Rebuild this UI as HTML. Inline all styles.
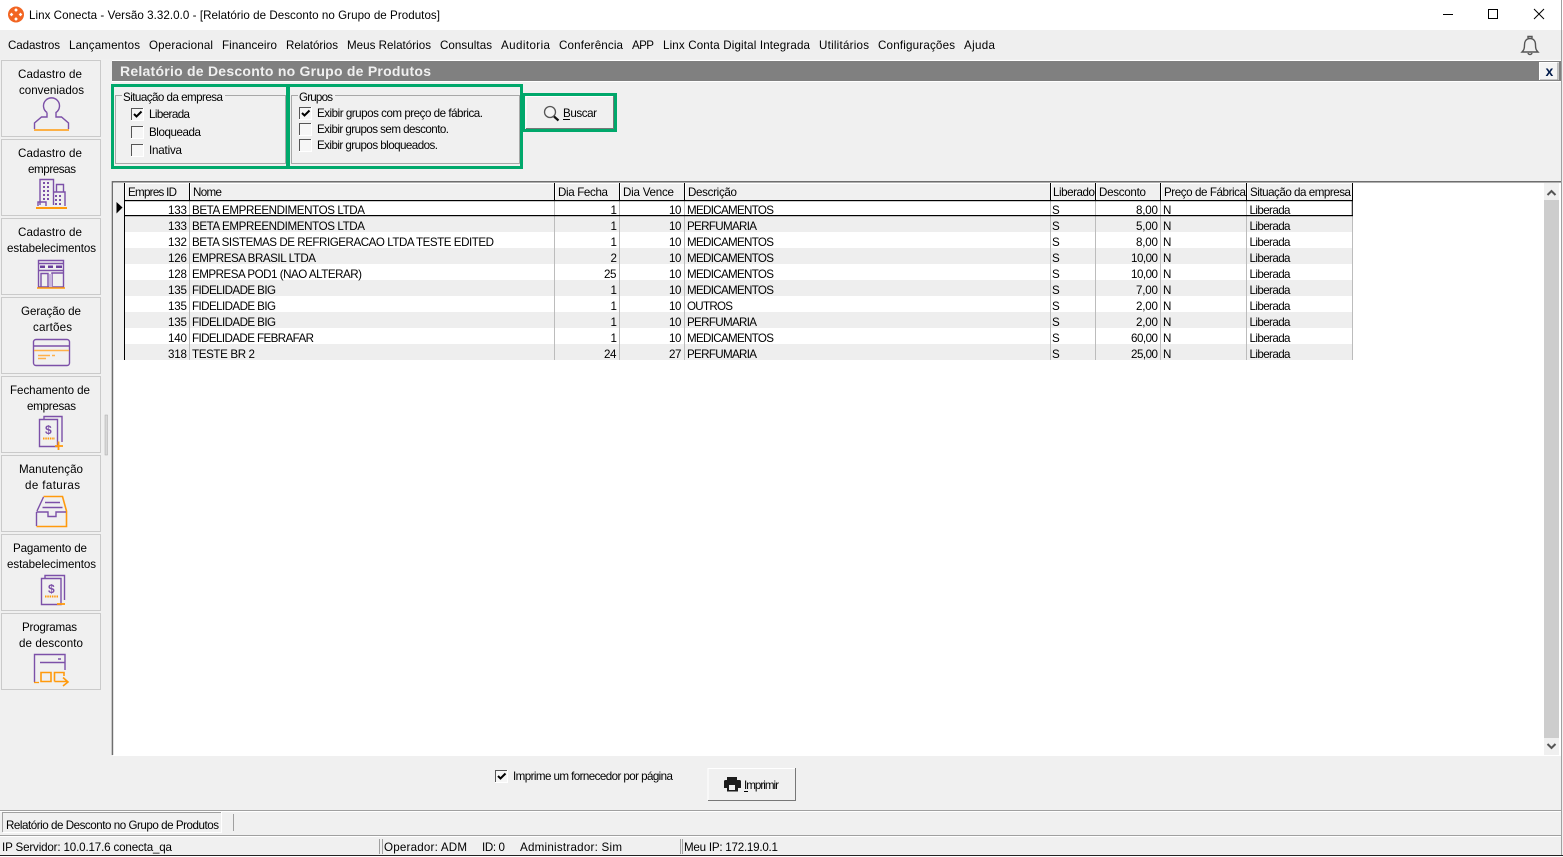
<!DOCTYPE html>
<html><head><meta charset="utf-8"><title>Linx Conecta</title>
<style>
html,body{margin:0;padding:0;width:1563px;height:857px;overflow:hidden;background:#f0f0f0}
svg{display:block;position:absolute;left:0;top:0}
text{font-family:"Liberation Sans",sans-serif;font-size:11.6px;fill:#000;white-space:pre}
.c{fill:#111}
.p{fill:none;stroke:#7c50a8;stroke-width:1.4}
.o{fill:none;stroke:#ff9a0d;stroke-width:1.6}
</style></head><body>
<svg width="1563" height="857" viewBox="0 0 1563 857" xmlns="http://www.w3.org/2000/svg">
<rect width="1563" height="857" fill="#f0f0f0"/>
<!-- Title bar -->
<rect width="1563" height="30" fill="#fff"/>
<rect y="30" width="1563" height="29" fill="#efefef"/>
<rect x="1561" y="0" width="1" height="857" fill="#a0a0a0"/>
<circle cx="16" cy="14.500" r="8" fill="#f26522"/>
<g fill="#fff"><rect x="14.700" y="8.700" width="2.600" height="2.600" transform="rotate(45 16 10)"/><rect x="14.700" y="17.700" width="2.600" height="2.600" transform="rotate(45 16 19)"/><rect x="10.200" y="13.200" width="2.600" height="2.600" transform="rotate(45 11.500 14.500)"/><rect x="19.200" y="13.200" width="2.600" height="2.600" transform="rotate(45 20.500 14.500)"/></g>
<text x="29" y="19" textLength="411">Linx Conecta - Versão 3.32.0.0 - [Relatório de Desconto no Grupo de Produtos]</text>
<path d="M1443 14.500H1453" stroke="#000" stroke-width="1"/>
<rect x="1488.500" y="9.500" width="9" height="9" fill="none" stroke="#000"/>
<path d="M1534 9l10 10M1544 9l-10 10" stroke="#000" stroke-width="1" fill="none"/>
<!-- Menu -->
<text x="8" y="49" textLength="52">Cadastros</text>
<text x="69" y="49" textLength="71">Lançamentos</text>
<text x="149" y="49" textLength="64">Operacional</text>
<text x="222" y="49" textLength="55">Financeiro</text>
<text x="286" y="49" textLength="52">Relatórios</text>
<text x="347" y="49" textLength="84">Meus Relatórios</text>
<text x="440" y="49" textLength="52">Consultas</text>
<text x="501" y="49" textLength="49">Auditoria</text>
<text x="559" y="49" textLength="64">Conferência</text>
<text x="632" y="49" textLength="22">APP</text>
<text x="663" y="49" textLength="147">Linx Conta Digital Integrada</text>
<text x="819" y="49" textLength="50">Utilitários</text>
<text x="878" y="49" textLength="77">Configurações</text>
<text x="964" y="49" textLength="31">Ajuda</text>
<path d="M1522 52c2-2 2.500-3.500 2.500-7 0-4 2-6.500 5.500-6.500s5.500 2.500 5.500 6.500c0 3.500 .5 5 2.500 7zM1528 38v-1.500h4V38M1528 53c.5 2 3.500 2 4 0" fill="none" stroke="#555" stroke-width="1.400"/>
<!-- Sidebar buttons -->
<g fill="#f0f0f0" stroke="#cacaca"><rect x="1.500" y="60.500" width="99" height="76"/><rect x="1.500" y="139.500" width="99" height="76"/><rect x="1.500" y="218.500" width="99" height="76"/><rect x="1.500" y="297.500" width="99" height="76"/><rect x="1.500" y="376.500" width="99" height="76"/><rect x="1.500" y="455.500" width="99" height="76"/><rect x="1.500" y="534.500" width="99" height="76"/><rect x="1.500" y="613.500" width="99" height="76"/></g>
<g class="c">
<text x="18" y="78" textLength="64">Cadastro de</text><text x="19" y="94" textLength="65">conveniados</text>
<text x="18" y="157" textLength="64">Cadastro de</text><text x="28" y="173" textLength="48">empresas</text>
<text x="18" y="236" textLength="64">Cadastro de</text><text x="7" y="252" textLength="89">estabelecimentos</text>
<text x="21" y="315" textLength="60">Geração de</text><text x="33" y="331" textLength="39">cartões</text>
<text x="10" y="394" textLength="80">Fechamento de</text><text x="27" y="410" textLength="49">empresas</text>
<text x="19" y="473" textLength="64">Manutenção</text><text x="25" y="489" textLength="55">de faturas</text>
<text x="13" y="552" textLength="74">Pagamento de</text><text x="7" y="568" textLength="89">estabelecimentos</text>
<text x="22" y="631" textLength="55">Programas</text><text x="19" y="647" textLength="64">de desconto</text>
</g>
<!-- Icon: person -->
<path class="p" d="M47 112.500A8 8 0 1 1 56 112.500V117H61.500L68.500 123V129M47 112.500V117H41.500L34.500 123V129"/>
<path class="o" d="M34 130H69"/>
<!-- Icon: buildings -->
<path class="p" d="M40 205V179.500H53.500V205M53.500 192H65V206M56.500 192V184.500H63.500V192M38 206V202H46V206"/>
<g fill="#7c50a8"><path d="M43 182h2v2h-2zM47 182h2v2h-2zM43 186h2v2h-2zM47 186h2v2h-2zM43 190h2v2h-2zM47 190h2v2h-2zM43 194h2v2h-2zM47 194h2v2h-2zM43 198h2v2h-2zM47 198h2v2h-2zM55 195h2v2h-2zM59 195h2v2h-2zM55 199h2v2h-2zM59 199h2v2h-2zM55 203h2v2h-2zM59 203h2v2h-2z"/></g>
<path d="M36 208H67" stroke="#ff9a0d" stroke-width="2"/>
<!-- Icon: store -->
<path class="p" d="M38.500 260.500H63.500V287H38.500ZM38.500 263.500H63.500M38.500 270.500H63.500M41 287V273.500H48V287M52 286V273H63"/>
<path d="M40 265.500h5v2.500h-5zM48 265.500h5v2.500h-5zM56 265.500h6v2.500h-6z" fill="#6b3f9c"/>
<rect x="49" y="274" width="3" height="13" fill="#c9b6de"/>
<path d="M37 288H65" stroke="#ff9a0d" stroke-width="1.500"/>
<!-- Icon: card -->
<rect class="p" x="33.500" y="339.500" width="36" height="26" rx="2.500"/>
<path d="M34 350.500H69" stroke="#ffb04a" stroke-width="1.500"/>
<path d="M38 355.500H50M52 355.500H55M38 358.500H46" stroke="#ffb04a" stroke-width="1.500"/>
<path class="p" d="M34 346H69"/>
<!-- Icon: doc plus -->
<path class="p" d="M39.500 419.500H57.500V446.500H39.500ZM44 419V416.500H62V442"/>
<text x="45" y="434" style="font-size:12px;font-weight:bold;fill:#7c50a8">$</text>
<path d="M43 438.500H55" stroke="#ff9a0d" stroke-width="2" stroke-dasharray="1.500 .8"/>
<path d="M55 446H63M58.500 441.500V450" stroke="#ff9a0d" stroke-width="1.800"/>
<!-- Icon: tray -->
<path class="o" d="M43.500 496.500H62.500L66.500 511V526.500H36.500"/>
<path class="p" d="M43.500 497L37 511M45 502.500H60M42.500 507.500H62.500M36.500 512H48V516.500H56V512H66M36.500 512V526"/>
<!-- Icon: doc minus -->
<path class="p" d="M41.500 578.500H61V604.500H41.500ZM45 578V575.500H64.500V600"/>
<text x="48" y="593" style="font-size:12px;font-weight:bold;fill:#7c50a8">$</text>
<path d="M45 596.500H58" stroke="#ff9a0d" stroke-width="2" stroke-dasharray="1.500 .8"/>
<path d="M57 604H65" stroke="#ff9a0d" stroke-width="1.800"/>
<!-- Icon: program -->
<path class="p" d="M34.500 682V654.500H65V670M40 662.500H65M58 659H61"/>
<path class="o" d="M41 681.500V672.500H51V681.500ZM54.500 681.500V672.500H64V676M54.500 681.500H67M63 677.500L68 682L63 686"/>
<path d="M34 682.500H39" stroke="#ff9a0d" stroke-width="1.300"/>
<!-- splitter -->
<rect x="105" y="415" width="2.500" height="40" fill="#d8d8d8" stroke="#aaa" stroke-width=".5"/>
<!-- Form header -->
<rect x="112" y="60" width="1449" height="1" fill="#fff"/>
<rect x="112" y="61" width="1449" height="20" fill="#808080"/>
<rect x="112" y="81" width="1449" height="1" fill="#fff"/>
<text x="120" y="76" textLength="311" style="font-size:14px;font-weight:bold;fill:#f0f0f0">Relatório de Desconto no Grupo de Produtos</text>
<rect x="1539.500" y="62.500" width="19" height="17" fill="#f4f4f4" stroke="#fff"/>
<path d="M1558 62.500V80H1540" stroke="#8a8a8a" fill="none"/>
<text x="1545.500" y="76" style="font-size:14px;font-weight:bold;fill:#001a4a">x</text>
<!-- Group boxes -->
<rect x="115.500" y="95.500" width="170" height="68" fill="none" stroke="#a8a8a8"/>
<rect x="291.500" y="95.500" width="228" height="68" fill="none" stroke="#a8a8a8"/>
<rect x="122" y="92" width="103" height="8" fill="#f0f0f0"/>
<rect x="298" y="92" width="37" height="8" fill="#f0f0f0"/>
<text x="123" y="101" textLength="100">Situação da empresa</text>
<text x="299" y="101" textLength="34">Grupos</text>
<g fill="#f6f6f6"><rect x="131" y="108" width="12" height="12"/><rect x="131" y="126" width="12" height="12"/><rect x="131" y="144" width="12" height="12"/><rect x="299" y="107" width="12" height="12"/><rect x="299" y="123" width="12" height="12"/><rect x="299" y="139" width="12" height="12"/><rect x="495" y="770" width="12" height="12"/></g>
<g fill="none" stroke="#555"><path d="M131.500 120V108.500H143"/><path d="M131.500 138V126.500H143"/><path d="M131.500 156V144.500H143"/><path d="M299.500 119V107.500H311"/><path d="M299.500 135V123.500H311"/><path d="M299.500 151V139.500H311"/><path d="M495.500 782V770.500H507"/></g>
<g fill="none" stroke="#fff"><path d="M143.500 108V120.500H131"/><path d="M143.500 126V138.500H131"/><path d="M143.500 144V156.500H131"/><path d="M311.500 107V119.500H299"/><path d="M311.500 123V135.500H299"/><path d="M311.500 139V151.500H299"/><path d="M507.500 770V782.500H495"/></g>
<g fill="none" stroke="#000" stroke-width="2"><path d="M134 114l2.500 2.500 5-5"/><path d="M302 113l2.500 2.500 5-5"/><path d="M498 776l2.500 2.500 5-5"/></g>
<text x="149" y="118" textLength="41">Liberada</text>
<text x="149" y="136" textLength="52">Bloqueada</text>
<text x="149" y="154" textLength="33">Inativa</text>
<text x="317" y="117" textLength="166">Exibir grupos com preço de fábrica.</text>
<text x="317" y="133" textLength="132">Exibir grupos sem desconto.</text>
<text x="317" y="149" textLength="121">Exibir grupos bloqueados.</text>
<!-- Green highlights -->
<g fill="none" stroke="#00a86b" stroke-width="3"><rect x="112.500" y="85.500" width="175" height="82"/><rect x="288.500" y="85.500" width="233" height="82"/><rect x="523.500" y="94.500" width="92" height="36"/></g>
<!-- Buscar button -->
<rect x="525.500" y="96.500" width="88" height="32" fill="#f0f0f0"/>
<path d="M526 128V96.500H613" stroke="#fff" fill="none"/>
<path d="M526 128.500H613.500V96" stroke="#777" fill="none"/>
<circle cx="550" cy="112" r="5.500" fill="#f4f4f4" stroke="#555" stroke-width="1.300"/>
<path d="M554 116.500L558.500 120.500" stroke="#111" stroke-width="2.200"/>
<text x="563" y="117" textLength="34">Buscar</text>
<path d="M563 119.500H570" stroke="#000"/>
<!-- Grid -->
<rect x="113" y="183" width="1448" height="572" fill="#fff"/>
<rect x="112" y="181" width="1449" height="1.500" fill="#6e6e6e"/>
<rect x="111.700" y="181" width="1.500" height="574" fill="#6e6e6e"/>
<rect x="113" y="755" width="1448" height="1" fill="#fff"/>
<rect x="113" y="183" width="11" height="177" fill="#f0f0f0"/>
<rect x="125" y="183" width="1227" height="17" fill="#f0f0f0"/>
<path d="M125.500 199V183.500H1352" stroke="#fff" fill="none"/>
<path d="M190.500 184V199M555.500 184V199M620.500 184V199M685.500 184V199M1051.500 184V199M1096.500 184V199M1161.500 184V199M1247.500 184V199" stroke="#fff"/>
<g fill="#eee"><rect x="125" y="216" width="1227" height="16"/><rect x="125" y="248" width="1227" height="16"/><rect x="125" y="280" width="1227" height="16"/><rect x="125" y="312" width="1227" height="16"/><rect x="125" y="344" width="1227" height="16"/></g>
<path d="M189.500 201V360M554.500 201V360M619.500 201V360M684.500 201V360M1050.500 201V360M1095.500 201V360M1160.500 201V360M1246.500 201V360M1352.500 216V360" stroke="#bcbcbc"/>
<path d="M189.500 183V200M554.500 183V200M619.500 183V200M684.500 183V200M1050.500 183V200M1095.500 183V200M1160.500 183V200M1246.500 183V200M1352.500 183V200" stroke="#000"/>
<rect x="124" y="183" width="1" height="177" fill="#000"/>
<rect x="124" y="200" width="1229" height="1.200" fill="#000"/>
<rect x="124" y="215" width="1229" height="1.200" fill="#000"/>
<rect x="1351.800" y="200" width="1" height="16" fill="#000"/>
<path d="M116.500 202L122.500 207.500L116.500 213.500Z" fill="#000"/>
<!-- Grid header -->
<text x="128" y="196" textLength="49">Empres ID</text>
<text x="193" y="196" textLength="29">Nome</text>
<text x="558" y="196" textLength="50">Dia Fecha</text>
<text x="623" y="196" textLength="51">Dia Vence</text>
<text x="688" y="196" textLength="49">Descrição</text>
<text x="1053" y="196" textLength="42">Liberado</text>
<text x="1099" y="196" textLength="47">Desconto</text>
<text x="1164" y="196" textLength="82">Preço de Fábrica</text>
<text x="1250" y="196" textLength="101">Situação da empresa</text>
<!-- Rows -->
<g>
<text x="168" y="214" textLength="19">133</text><text x="192" y="214" textLength="173">BETA EMPREENDIMENTOS LTDA</text><text x="610.500" y="214">1</text><text x="669" y="214" textLength="12.500">10</text><text x="687" y="214" textLength="87">MEDICAMENTOS</text><text x="1052" y="214">S</text><text x="1136" y="214" textLength="22">8,00</text><text x="1163" y="214">N</text><text x="1249.500" y="214" textLength="41">Liberada</text>
<text x="168" y="230" textLength="19">133</text><text x="192" y="230" textLength="173">BETA EMPREENDIMENTOS LTDA</text><text x="610.500" y="230">1</text><text x="669" y="230" textLength="12.500">10</text><text x="687" y="230" textLength="70">PERFUMARIA</text><text x="1052" y="230">S</text><text x="1136" y="230" textLength="22">5,00</text><text x="1163" y="230">N</text><text x="1249.500" y="230" textLength="41">Liberada</text>
<text x="168" y="246" textLength="19">132</text><text x="192" y="246" textLength="302">BETA SISTEMAS DE REFRIGERACAO LTDA TESTE EDITED</text><text x="610.500" y="246">1</text><text x="669" y="246" textLength="12.500">10</text><text x="687" y="246" textLength="87">MEDICAMENTOS</text><text x="1052" y="246">S</text><text x="1136" y="246" textLength="22">8,00</text><text x="1163" y="246">N</text><text x="1249.500" y="246" textLength="41">Liberada</text>
<text x="168" y="262" textLength="19">126</text><text x="192" y="262" textLength="124">EMPRESA BRASIL LTDA</text><text x="610.500" y="262">2</text><text x="669" y="262" textLength="12.500">10</text><text x="687" y="262" textLength="87">MEDICAMENTOS</text><text x="1052" y="262">S</text><text x="1131" y="262" textLength="27">10,00</text><text x="1163" y="262">N</text><text x="1249.500" y="262" textLength="41">Liberada</text>
<text x="168" y="278" textLength="19">128</text><text x="192" y="278" textLength="170">EMPRESA POD1 (NAO ALTERAR)</text><text x="604" y="278" textLength="12.500">25</text><text x="669" y="278" textLength="12.500">10</text><text x="687" y="278" textLength="87">MEDICAMENTOS</text><text x="1052" y="278">S</text><text x="1131" y="278" textLength="27">10,00</text><text x="1163" y="278">N</text><text x="1249.500" y="278" textLength="41">Liberada</text>
<text x="168" y="294" textLength="19">135</text><text x="192" y="294" textLength="84">FIDELIDADE BIG</text><text x="610.500" y="294">1</text><text x="669" y="294" textLength="12.500">10</text><text x="687" y="294" textLength="87">MEDICAMENTOS</text><text x="1052" y="294">S</text><text x="1136" y="294" textLength="22">7,00</text><text x="1163" y="294">N</text><text x="1249.500" y="294" textLength="41">Liberada</text>
<text x="168" y="310" textLength="19">135</text><text x="192" y="310" textLength="84">FIDELIDADE BIG</text><text x="610.500" y="310">1</text><text x="669" y="310" textLength="12.500">10</text><text x="687" y="310" textLength="46">OUTROS</text><text x="1052" y="310">S</text><text x="1136" y="310" textLength="22">2,00</text><text x="1163" y="310">N</text><text x="1249.500" y="310" textLength="41">Liberada</text>
<text x="168" y="326" textLength="19">135</text><text x="192" y="326" textLength="84">FIDELIDADE BIG</text><text x="610.500" y="326">1</text><text x="669" y="326" textLength="12.500">10</text><text x="687" y="326" textLength="70">PERFUMARIA</text><text x="1052" y="326">S</text><text x="1136" y="326" textLength="22">2,00</text><text x="1163" y="326">N</text><text x="1249.500" y="326" textLength="41">Liberada</text>
<text x="168" y="342" textLength="19">140</text><text x="192" y="342" textLength="122">FIDELIDADE FEBRAFAR</text><text x="610.500" y="342">1</text><text x="669" y="342" textLength="12.500">10</text><text x="687" y="342" textLength="87">MEDICAMENTOS</text><text x="1052" y="342">S</text><text x="1131" y="342" textLength="27">60,00</text><text x="1163" y="342">N</text><text x="1249.500" y="342" textLength="41">Liberada</text>
<text x="168" y="358" textLength="19">318</text><text x="192" y="358" textLength="63">TESTE BR 2</text><text x="604" y="358" textLength="12.500">24</text><text x="669" y="358" textLength="12.500">27</text><text x="687" y="358" textLength="70">PERFUMARIA</text><text x="1052" y="358">S</text><text x="1131" y="358" textLength="27">25,00</text><text x="1163" y="358">N</text><text x="1249.500" y="358" textLength="41">Liberada</text>
</g>
<!-- Scrollbar -->
<rect x="1544" y="183" width="15" height="572" fill="#f0f0f0"/>
<rect x="1544" y="200" width="15" height="538" fill="#cdcdcd"/>
<path d="M1547.500 195L1551.500 191L1555.500 195" fill="none" stroke="#555" stroke-width="2"/>
<path d="M1547.500 744L1551.500 748L1555.500 744" fill="none" stroke="#555" stroke-width="2"/>
<!-- Bottom options -->
<text x="513" y="780" textLength="160">Imprime um fornecedor por página</text>
<rect x="707.500" y="768.500" width="88" height="32" fill="#f0f0f0"/>
<path d="M708 800V768.500H795" stroke="#fff" fill="none"/>
<path d="M708 800.500H795.500V768" stroke="#777" fill="none"/>
<path d="M727 780V777h10v3h2.500a1.500 1.500 0 0 1 1.500 1.500V788h-3v3.500h-11V788h-3v-6.500a1.500 1.500 0 0 1 1.500-1.500z" fill="#1c1c1c"/>
<rect x="729" y="785" width="6" height="5" fill="#eee"/>
<text x="744" y="789" textLength="35">Imprimir</text>
<path d="M744 791.500H748" stroke="#000"/>
<!-- Tabs -->
<rect x="0" y="810" width="1561" height="1" fill="#a0a0a0"/>
<rect x="0" y="811" width="1561" height="1" fill="#fff"/>
<path d="M2.500 832V812.500H221" stroke="#a0a0a0" fill="none"/>
<path d="M3 832.500H221.500V812" stroke="#fff" fill="none"/>
<text x="6" y="829" textLength="213">Relatório de Desconto no Grupo de Produtos</text>
<rect x="233" y="814" width="1" height="17" fill="#a0a0a0"/>
<!-- Status bar -->
<rect x="0" y="835" width="1561" height="1" fill="#a0a0a0"/>
<rect x="0" y="836" width="1561" height="1" fill="#fff"/>
<path d="M379.500 839V854M382.500 839V854M680.500 839V854M682.500 839V854" stroke="#a0a0a0"/>
<rect x="0" y="855" width="1563" height="1" fill="#222"/>
<rect x="0" y="856" width="1563" height="1" fill="#fff"/>
<text x="2" y="851" textLength="170">IP Servidor: 10.0.17.6 conecta_qa</text>
<text x="384" y="851" textLength="83">Operador: ADM</text>
<text x="482" y="851" textLength="23">ID: 0</text>
<text x="520" y="851" textLength="102">Administrador: Sim</text>
<text x="684" y="851" textLength="94">Meu IP: 172.19.0.1</text>
</svg>
</body></html>
